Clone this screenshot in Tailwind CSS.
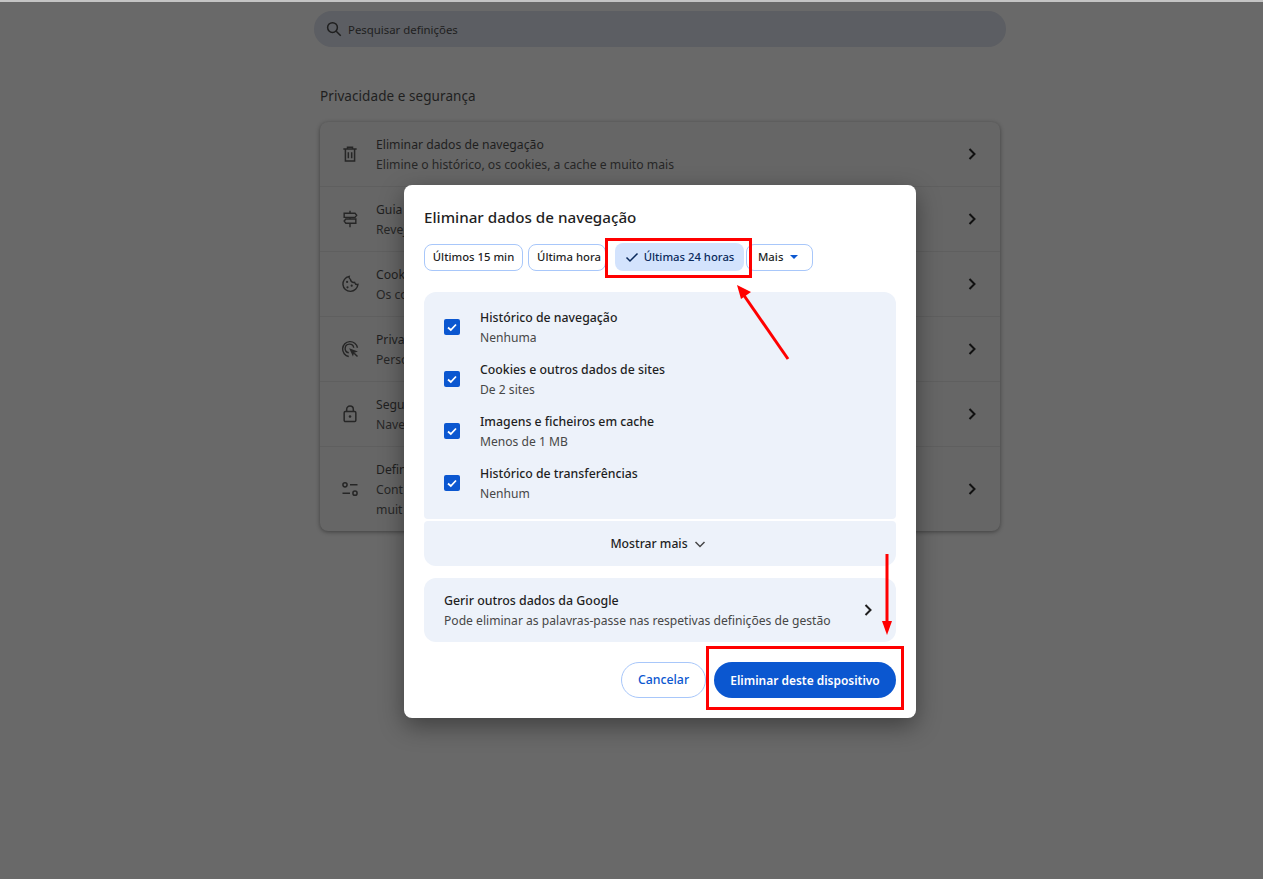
<!DOCTYPE html>
<html lang="pt">
<head>
    <meta charset="UTF-8">
    <script src="https://cdn.jsdelivr.net/npm/@tailwindcss/browser@4"></script>
    <title>Definições</title>
</head>
<body class="bg-[#696969] font-['Noto_Sans','Open_Sans',sans-serif] overflow-hidden">
<div class="relative w-[1263px] h-[879px] overflow-hidden border-t-2 border-t-[#c4c4c4]">

    <!-- Settings page behind the dialog -->
    <div class="w-[692px] ml-[314px] pt-[9px]">
        <div class="h-[36px] rounded-full bg-[#5c5e63] flex items-center pl-[11px] gap-[5px] text-[11.4px] text-[#1f1f1f]">
            <svg class="w-[18px] h-[18px]" viewBox="0 0 24 24" fill="none" stroke="#1f1f1f" stroke-width="2"><circle cx="10" cy="10" r="6.5"/><path d="M15 15l6 6"/></svg>
            <span class="pt-[2px]">Pesquisar definições</span>
        </div>
        <h2 class="ml-[6px] mt-[39px] text-[13.5px] leading-[20px] text-[#1f1f1f] tracking-[0.07px]">Privacidade e segurança</h2>
        <div class="mx-[6px] mt-[16px] w-[680px] h-[409px] rounded-[8px] bg-[#666666] shadow-[0_1px_4px_rgba(0,0,0,0.4)] text-[12.2px] leading-[20px] text-[#1f1f1f]">
            <div class="h-[64px] flex items-center pl-[20px] pr-[21px]">
                <svg class="w-[20px] h-[20px]" viewBox="0 0 24 24" fill="none" stroke="#262626" stroke-width="1.800"><path d="M4 6h16M9 6V4h6v2M6.500 6v14.500h11V6M10 10v7M14 10v7"/></svg>
                <div class="ml-[16px] flex-1 pt-[2px]"><div>Eliminar dados de navegação</div><div class="text-[#262626]">Elimine o histórico, os cookies, a cache e muito mais</div></div>
                <svg class="w-[14px] h-[14px]" viewBox="0 0 14 14" fill="none" stroke="#111" stroke-width="2"><path d="M4.500 2l5 5-5 5"/></svg>
            </div>
            <div class="h-[65px] flex items-center pl-[20px] pr-[21px] border-t border-[#5f5f5f]">
                <svg class="w-[20px] h-[20px]" viewBox="0 0 24 24" fill="none" stroke="#262626" stroke-width="1.700"><path d="M12 2v3M12 10v2M12 17v5M5 5h13l2 2.500L18 10H5zM19 12H7l-2 2.500L7 17h12z"/></svg>
                <div class="ml-[16px] flex-1 pt-[2px]"><div>Guia</div><div class="text-[#262626]">Revej</div></div>
                <svg class="w-[14px] h-[14px]" viewBox="0 0 14 14" fill="none" stroke="#111" stroke-width="2"><path d="M4.500 2l5 5-5 5"/></svg>
            </div>
            <div class="h-[65px] flex items-center pl-[20px] pr-[21px] border-t border-[#5f5f5f]">
                <svg class="w-[20px] h-[20px]" viewBox="0 0 24 24" fill="none" stroke="#262626" stroke-width="1.700"><path d="M11 3a9 9 0 1 0 10.500 9.500 3.500 3.500 0 0 1-4-2.500 4 4 0 0 1-5-3.500 3 3 0 0 1-1.500-3.500z"/><circle cx="8.500" cy="9.500" r="1.300" fill="#262626" stroke="none"/><circle cx="14" cy="14" r="1.300" fill="#262626" stroke="none"/><circle cx="9" cy="16" r="1.300" fill="#262626" stroke="none"/></svg>
                <div class="ml-[16px] flex-1 pt-[2px]"><div>Cook</div><div class="text-[#262626]">Os co</div></div>
                <svg class="w-[14px] h-[14px]" viewBox="0 0 14 14" fill="none" stroke="#111" stroke-width="2"><path d="M4.500 2l5 5-5 5"/></svg>
            </div>
            <div class="h-[65px] flex items-center pl-[20px] pr-[21px] border-t border-[#5f5f5f]">
                <svg class="w-[20px] h-[20px]" viewBox="0 0 24 24" fill="none" stroke="#262626" stroke-width="1.700"><path d="M10.500 21A9 9 0 1 1 21 10.500M10.500 16.500a5.200 5.200 0 1 1 6-6"/><path d="M11 11l10.500 4-4.500 1.500-1.500 4.500z" fill="#262626" stroke="none"/><path d="M17 17l4 4"/></svg>
                <div class="ml-[16px] flex-1 pt-[2px]"><div>Priva</div><div class="text-[#262626]">Perso</div></div>
                <svg class="w-[14px] h-[14px]" viewBox="0 0 14 14" fill="none" stroke="#111" stroke-width="2"><path d="M4.500 2l5 5-5 5"/></svg>
            </div>
            <div class="h-[65px] flex items-center pl-[20px] pr-[21px] border-t border-[#5f5f5f]">
                <svg class="w-[20px] h-[20px]" viewBox="0 0 24 24" fill="none" stroke="#262626" stroke-width="1.800"><rect x="5" y="9" width="14" height="12" rx="1.500"/><path d="M8 9V6.500a4 4 0 0 1 8 0V9"/><circle cx="12" cy="15" r="1.500" fill="#262626" stroke="none"/></svg>
                <div class="ml-[16px] flex-1 pt-[2px]"><div>Segu</div><div class="text-[#262626]">Nave</div></div>
                <svg class="w-[14px] h-[14px]" viewBox="0 0 14 14" fill="none" stroke="#111" stroke-width="2"><path d="M4.500 2l5 5-5 5"/></svg>
            </div>
            <div class="h-[85px] flex items-center pl-[20px] pr-[21px] border-t border-[#5f5f5f]">
                <svg class="w-[20px] h-[20px]" viewBox="0 0 24 24" fill="none" stroke="#262626" stroke-width="1.800"><circle cx="6" cy="7" r="2.500"/><path d="M12 7h9M3 17h9"/><circle cx="18" cy="17" r="2.500"/></svg>
                <div class="ml-[16px] flex-1 pt-[2px]"><div>Defin</div><div class="text-[#262626]">Cont</div><div class="text-[#262626]">muit</div></div>
                <svg class="w-[14px] h-[14px]" viewBox="0 0 14 14" fill="none" stroke="#111" stroke-width="2"><path d="M4.500 2l5 5-5 5"/></svg>
            </div>
        </div>
    </div>

    <!-- Dialog -->
    <div class="absolute left-[404px] top-[183px] w-[512px] h-[533px] rounded-[8px] bg-white shadow-[0_8px_24px_rgba(0,0,0,0.4)] px-[20px] pt-[21px] text-[#1f1f1f]">
        <h1 class="text-[15.2px] leading-[22px] font-medium">Eliminar dados de navegação</h1>
        <div class="mt-[15px] flex items-center h-[28px] text-[11.3px] font-medium">
            <button class="h-[27px] w-[99px] rounded-[8px] border border-[#a8c7fa]">Últimos 15 min</button>
            <button class="ml-[5px] h-[27px] w-[78px] pl-[4px] rounded-[8px] border border-[#a8c7fa]">Última hora</button>
            <button class="ml-[9px] h-[28px] w-[129px] rounded-[8px] bg-[#d3e3fd] text-[#0a2a5c] flex items-center justify-center gap-[5px]">
                <svg class="w-[14px] h-[14px]" viewBox="0 0 14 14" fill="none" stroke="#0a2a5c" stroke-width="1.500"><path d="M1.500 7.500l3.500 3.500 7.500-7.500"/></svg>
                <span>Últimas 24 horas</span>
            </button>
            <button class="ml-[2px] h-[27px] w-[67px] rounded-[8px] border border-[#a8c7fa] flex items-center pl-[11px] gap-[7px]">
                <span>Mais</span>
                <span class="w-0 h-0 border-x-[4px] border-x-transparent border-t-[4px] border-t-[#0b57d0]"></span>
            </button>
        </div>

        <div class="mt-[21px] h-[227px] rounded-t-[12px] rounded-b-[4px] bg-[#edf2fa] pl-[20px] pt-[15px] flex flex-col">
            <div class="h-[52px] flex items-start">
                <span class="mt-[12px] w-[16px] h-[16px] rounded-[2px] bg-[#0b57d0] flex items-center justify-center"><svg class="w-[12px] h-[12px]" viewBox="0 0 12 12" fill="none" stroke="#fff" stroke-width="1.800"><path d="M2 6.500l2.800 2.500L10 3.500"/></svg></span>
                <div class="ml-[20px] mt-[1px] leading-[20px]"><div class="text-[12.3px] font-medium">Histórico de navegação</div><div class="text-[12.1px] text-[#474747]">Nenhuma</div></div>
            </div>
            <div class="h-[52px] flex items-start">
                <span class="mt-[12px] w-[16px] h-[16px] rounded-[2px] bg-[#0b57d0] flex items-center justify-center"><svg class="w-[12px] h-[12px]" viewBox="0 0 12 12" fill="none" stroke="#fff" stroke-width="1.800"><path d="M2 6.500l2.800 2.500L10 3.500"/></svg></span>
                <div class="ml-[20px] mt-[1px] leading-[20px]"><div class="text-[12.3px] font-medium">Cookies e outros dados de sites</div><div class="text-[12.1px] text-[#474747]">De 2 sites</div></div>
            </div>
            <div class="h-[52px] flex items-start">
                <span class="mt-[12px] w-[16px] h-[16px] rounded-[2px] bg-[#0b57d0] flex items-center justify-center"><svg class="w-[12px] h-[12px]" viewBox="0 0 12 12" fill="none" stroke="#fff" stroke-width="1.800"><path d="M2 6.500l2.800 2.500L10 3.500"/></svg></span>
                <div class="ml-[20px] mt-[1px] leading-[20px]"><div class="text-[12.3px] font-medium">Imagens e ficheiros em cache</div><div class="text-[12.1px] text-[#474747]">Menos de 1 MB</div></div>
            </div>
            <div class="h-[52px] flex items-start">
                <span class="mt-[12px] w-[16px] h-[16px] rounded-[2px] bg-[#0b57d0] flex items-center justify-center"><svg class="w-[12px] h-[12px]" viewBox="0 0 12 12" fill="none" stroke="#fff" stroke-width="1.800"><path d="M2 6.500l2.800 2.500L10 3.500"/></svg></span>
                <div class="ml-[20px] mt-[1px] leading-[20px]"><div class="text-[12.3px] font-medium">Histórico de transferências</div><div class="text-[12.1px] text-[#474747]">Nenhum</div></div>
            </div>
        </div>
        <div class="mt-[2px] h-[45px] rounded-t-[4px] rounded-b-[12px] bg-[#edf2fa] flex items-center justify-center gap-[5px] pr-[3px] text-[12.2px] font-medium">
            <span class="pt-[2px]">Mostrar mais</span>
            <svg class="w-[14px] h-[14px]" viewBox="0 0 14 14" fill="none" stroke="#474747" stroke-width="1.500"><path d="M2.500 5l4.500 4.500L11.500 5"/></svg>
        </div>
        <div class="mt-[12px] h-[64px] rounded-[12px] bg-[#edf2fa] pl-[20px] pr-[21px] flex items-center justify-between leading-[20px]">
            <div class="pt-[2px]"><div class="text-[12.4px] font-medium">Gerir outros dados da Google</div><div class="text-[12.12px] text-[#474747]">Pode eliminar as palavras-passe nas respetivas definições de gestão</div></div>
            <svg class="w-[14px] h-[14px]" viewBox="0 0 14 14" fill="none" stroke="#1f1f1f" stroke-width="2"><path d="M4.500 2l5 5-5 5"/></svg>
        </div>
        <div class="mt-[20px] flex justify-end gap-[8px] font-medium">
            <button class="w-[85px] h-[36px] pt-[1px] rounded-full border border-[#a8c7fa] text-[12.3px] text-[#0b57d0]">Cancelar</button>
            <button class="w-[182px] h-[36px] pt-[1px] rounded-full bg-[#0b57d0] text-[11.95px] text-white font-semibold">Eliminar deste dispositivo</button>
        </div>
    </div>

    <!-- Red annotations -->
    <div class="absolute left-[605px] top-[236px] w-[147px] h-[40px] border-[3px] border-[#f00]"></div>
    <div class="absolute left-[706px] top-[644px] w-[198px] h-[64px] border-[3px] border-[#f00]"></div>
    <svg class="absolute left-0 top-[-2px] w-[1263px] h-[879px] pointer-events-none" viewBox="0 0 1263 879" fill="none">
        <path d="M788 359L743 294" stroke="#f00" stroke-width="3"/>
        <path d="M737 285l14 7-10 7z" fill="#f00"/>
        <path d="M887 554V626" stroke="#f00" stroke-width="3"/>
        <path d="M882 621h10l-5 14z" fill="#f00"/>
    </svg>
</div>
</body>
</html>
